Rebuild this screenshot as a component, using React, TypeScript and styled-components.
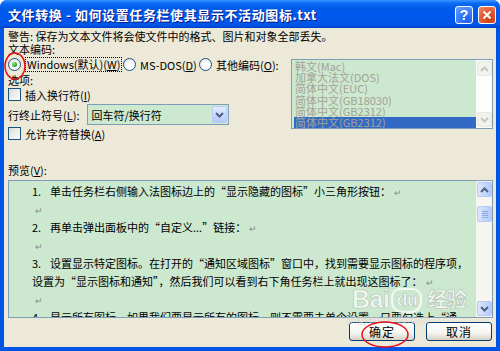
import React from "react";
import styled, { createGlobalStyle } from "styled-components";

const Global = createGlobalStyle`
  html, body { margin: 0; padding: 0; background: #ffffff; }
  body { font-family: "SimSun", "Noto Sans CJK SC", "Liberation Sans", sans-serif; }
  * { box-sizing: border-box; }
`;

const CJK = `"SimSun", "Noto Sans CJK SC", "Liberation Sans", sans-serif`;

const Window = styled.div`
  position: relative;
  width: 500px;
  height: 351px;
  display: flex;
  flex-direction: column;
  background: #0055e5;
  border-radius: 7px 7px 0 0;
  overflow: hidden;
  font-family: ${CJK};
  font-size: 11px;
  color: #000;
`;

const TitleBar = styled.div`
  height: 28px;
  flex: none;
  display: flex;
  align-items: center;
  justify-content: space-between;
  padding: 0 4px 0 8px;
  background: linear-gradient(
    to bottom,
    #3d95ff 0%,
    #0a6af5 12%,
    #005be9 30%,
    #0058ee 60%,
    #0055e8 90%,
    #0040c8 100%
  );
`;

const TitleText = styled.div`
  color: #fff;
  font-weight: bold;
  font-size: 13px;
  letter-spacing: 0.6px;
  text-shadow: 1px 1px 0 #0a1883;
  white-space: nowrap;
`;

const TitleButtons = styled.div`
  display: flex;
  gap: 5px;
  align-items: center;
  margin-top: 1px;
`;

const CapButton = styled.div<{ $kind: "help" | "close" }>`
  width: 18px;
  height: 18px;
  border: 1px solid #fff;
  border-radius: 3px;
  display: flex;
  align-items: center;
  justify-content: center;
  color: #fff;
  font-family: "Liberation Sans", sans-serif;
  font-weight: bold;
  font-size: 14px;
  background: ${(p) =>
    p.$kind === "help"
      ? "radial-gradient(circle at 70% 80%, #1f5ff0 0%, #3b7dff 50%, #6fa2ff 100%)"
      : "radial-gradient(circle at 70% 80%, #c8400f 0%, #e0582f 50%, #f08c6a 100%)"};
`;

const Body = styled.div`
  flex: 1;
  margin: 0 4px 4px 4px;
  background: #ece9d8;
  padding: 2px 3px 0 4px;
  display: flex;
  flex-direction: column;
`;

const Line = styled.div<{ $h?: number }>`
  height: ${(p) => p.$h ?? 13}px;
  line-height: ${(p) => p.$h ?? 13}px;
  white-space: nowrap;
`;

const EncodingArea = styled.div`
  display: flex;
  justify-content: space-between;
  align-items: flex-start;
`;

const LeftCol = styled.div`
  display: flex;
  flex-direction: column;
`;

const RadioRow = styled.div`
  display: flex;
  align-items: center;
  height: 17px;
  margin-top: 1px;
`;

const RadioItem = styled.label<{ $w: number }>`
  display: flex;
  align-items: center;
  gap: 4px;
  width: ${(p) => p.$w}px;
  white-space: nowrap;
`;

const Radio = styled.span<{ $on?: boolean }>`
  width: 13px;
  height: 13px;
  border-radius: 50%;
  border: 1px solid #1c5180;
  background: radial-gradient(circle at 60% 65%, #ffffff 30%, #dcdcd6 100%);
  display: flex;
  align-items: center;
  justify-content: center;
  flex: none;
  &::after {
    content: "";
    display: ${(p) => (p.$on ? "block" : "none")};
    width: 5px;
    height: 5px;
    border-radius: 50%;
    background: radial-gradient(circle at 35% 35%, #8ee08a 0%, #21a121 70%);
  }
`;

const Focus = styled.span`
  border: 1px dotted #000;
  padding: 0 1px;
  line-height: 13px;
`;

const Check = styled.span`
  width: 13px;
  height: 13px;
  border: 1px solid #1c5180;
  background: linear-gradient(135deg, #dcdcd6 0%, #ffffff 100%);
  flex: none;
`;

const CheckRow = styled.div`
  display: flex;
  align-items: center;
  gap: 4px;
  height: 15px;
`;

const ComboRow = styled.div`
  display: flex;
  align-items: center;
  height: 21px;
  margin: 2px 0 1px;
`;

const Combo = styled.div`
  margin-left: 8px;
  width: 142px;
  height: 21px;
  border: 1px solid #7f9db9;
  background: #cce8cf;
  display: flex;
  align-items: center;
  justify-content: space-between;
  padding: 1px 1px 1px 3px;
`;

const DropBtn = styled.div`
  width: 15px;
  height: 17px;
  border: 1px solid #b9cdf4;
  border-radius: 2px;
  background: linear-gradient(to bottom, #e4ecfd 0%, #c6d6fb 60%, #b3c8f7 100%);
  display: flex;
  align-items: center;
  justify-content: center;
`;

const ListBox = styled.div`
  margin-top: 4px;
  width: 202px;
  height: 70px;
  border: 1px solid #7f9db9;
  background: #cce8cf;
  display: flex;
`;

const ListItems = styled.div`
  flex: 1;
  display: flex;
  flex-direction: column;
  padding: 1px 0 0 2px;
`;

const ListItem = styled.div<{ $sel?: boolean }>`
  height: 11.2px;
  line-height: 11px;
  font-size: 11px;
  color: #a5a295;
  padding-left: 1px;
  white-space: nowrap;
  background: ${(p) => (p.$sel ? "#316ac5" : "transparent")};
`;

const ScrollBar = styled.div<{ $disabled?: boolean }>`
  width: 16px;
  flex: none;
  display: flex;
  flex-direction: column;
  justify-content: space-between;
  background: ${(p) => (p.$disabled ? "#fdfdfb" : "#f6f5f0")};
  padding: 1px 0;
`;

const ScrollBtn = styled.div<{ $disabled?: boolean }>`
  width: 15px;
  height: 15px;
  margin-left: 1px;
  border-radius: 2px;
  display: flex;
  align-items: center;
  justify-content: center;
  border: 1px solid ${(p) => (p.$disabled ? "#e8e8e0" : "#b5c9f6")};
  background: ${(p) =>
    p.$disabled
      ? "#f3f3ee"
      : "linear-gradient(to right, #dce6fd 0%, #c3d4fb 60%, #b6cbf8 100%)"};
`;

const Thumb = styled.div`
  width: 15px;
  height: 16px;
  margin: 9px 0 0 1px;
  border-radius: 2px;
  border: 1px solid #b5c9f6;
  background: linear-gradient(to right, #dce6fd 0%, #c3d4fb 60%, #b6cbf8 100%);
  display: flex;
  flex-direction: column;
  align-items: center;
  justify-content: center;
  gap: 1px;
  & > span {
    width: 6px;
    height: 1px;
    background: #8aa8e8;
  }
`;

const ScrollTop = styled.div`
  display: flex;
  flex-direction: column;
`;

const PreviewLabel = styled(Line)`
  margin-top: 23px;
`;

const Preview = styled.div`
  margin-top: 3px;
  height: 138px;
  border: 1px solid #7f9db9;
  background: #cce8cf;
  display: flex;
  overflow: hidden;
`;

const PreviewText = styled.div`
  flex: 1;
  padding: 1px 0 0 23px;
  overflow: hidden;
`;

const PLine = styled.div`
  height: 18px;
  line-height: 18px;
  white-space: nowrap;
  font-size: 11px;
`;

const Num = styled.span`
  display: inline-block;
  width: 18px;
`;

const Ret = styled.span`
  color: #8a8a8a;
  font-size: 9px;
  margin-left: 3px;
`;

const ButtonRow = styled.div`
  display: flex;
  justify-content: flex-end;
  gap: 11px;
  margin-top: 4px;
  padding-right: 1px;
`;

const Button = styled.div`
  width: 66px;
  height: 19px;
  border: 1px solid #003c74;
  border-radius: 3px;
  background: linear-gradient(to bottom, #ffffff 0%, #f4f4f0 60%, #d6d0c5 100%);
  display: flex;
  align-items: center;
  justify-content: center;
  font-size: 12px;
  letter-spacing: 1px;
`;

const Ellipse = styled.svg<{ $x: number; $y: number }>`
  position: absolute;
  left: ${(p) => p.$x}px;
  top: ${(p) => p.$y}px;
  pointer-events: none;
`;

const Watermark = styled.div`
  position: absolute;
  left: 352px;
  top: 284px;
  display: flex;
  flex-direction: column;
  align-items: flex-start;
  pointer-events: none;
  color: rgba(255, 255, 255, 0.72);
  font-family: "Liberation Sans", sans-serif;
  font-weight: bold;
`;

const WmLogo = styled.div`
  font-size: 25px;
  line-height: 26px;
  letter-spacing: -0.5px;
  -webkit-text-stroke: 0.6px rgba(120, 120, 120, 0.45);
  display: flex;
  align-items: center;
  gap: 2px;
`;

const WmPaw = styled.span`
  font-size: 18px;
  line-height: 18px;
  padding: 1px 3px 2px;
  border: 2px solid rgba(255, 255, 255, 0.75);
  border-radius: 9px 9px 11px 11px;
  margin-top: 4px;
`;

const WmCn = styled.span`
  font-family: "Noto Sans CJK SC", sans-serif;
  font-size: 20px;
  margin-left: 3px;
`;

const WmUrl = styled.div`
  font-size: 10px;
  line-height: 11px;
  margin-top: 1px;
  margin-left: -4px;
  font-weight: normal;
  color: rgba(255, 255, 255, 0.6);
  -webkit-text-stroke: 0.3px rgba(120, 120, 120, 0.4);
`;

const Chevron = ({ dir, color }: { dir: "up" | "down"; color: string }) => (
  <svg width="9" height="6" viewBox="0 0 9 6">
    <path
      d={dir === "up" ? "M1 5 L4.5 1.5 L8 5" : "M1 1 L4.5 4.5 L8 1"}
      fill="none"
      stroke={color}
      strokeWidth="2"
    />
  </svg>
);

const listItems = [
  "韩文(Mac)",
  "加拿大法文(DOS)",
  "简体中文(EUC)",
  "简体中文(GB18030)",
  "简体中文(GB2312)",
  "简体中文(GB2312)",
];

export default function App() {
  return (
    <>
      <Global />
      <Window>
        <TitleBar>
          <TitleText>文件转换 - 如何设置任务栏使其显示不活动图标.txt</TitleText>
          <TitleButtons>
            <CapButton $kind="help">?</CapButton>
            <CapButton $kind="close">
              <svg width="10" height="10" viewBox="0 0 10 10">
                <path d="M1.5 1.5 L8.5 8.5 M8.5 1.5 L1.5 8.5" stroke="#fff" strokeWidth="2" />
              </svg>
            </CapButton>
          </TitleButtons>
        </TitleBar>
        <Body>
          <Line>警告: 保存为文本文件将会使文件中的格式、图片和对象全部丢失。</Line>
          <Line $h={12}>文本编码:</Line>
          <EncodingArea>
            <LeftCol>
              <RadioRow>
                <RadioItem $w={115}>
                  <Radio $on />
                  <Focus>Windows(默认)(<u>W</u>)</Focus>
                </RadioItem>
                <RadioItem $w={76}>
                  <Radio />
                  <span>MS-DOS(<u>D</u>)</span>
                </RadioItem>
                <RadioItem $w={90}>
                  <Radio />
                  <span>其他编码(<u>O</u>):</span>
                </RadioItem>
              </RadioRow>
              <Line $h={14}>选项:</Line>
              <CheckRow>
                <Check />
                <span>插入换行符(<u>I</u>)</span>
              </CheckRow>
              <ComboRow>
                <span>行终止符号(<u>L</u>):</span>
                <Combo>
                  <span>回车符/换行符</span>
                  <DropBtn>
                    <Chevron dir="down" color="#4d6185" />
                  </DropBtn>
                </Combo>
              </ComboRow>
              <CheckRow>
                <Check />
                <span>允许字符替换(<u>A</u>)</span>
              </CheckRow>
            </LeftCol>
            <ListBox>
              <ListItems>
                {listItems.map((t, i) => (
                  <ListItem key={i} $sel={i === 5}>
                    {t}
                  </ListItem>
                ))}
              </ListItems>
              <ScrollBar $disabled>
                <ScrollBtn $disabled>
                  <Chevron dir="up" color="#c9c7ba" />
                </ScrollBtn>
                <ScrollBtn $disabled>
                  <Chevron dir="down" color="#c9c7ba" />
                </ScrollBtn>
              </ScrollBar>
            </ListBox>
          </EncodingArea>
          <PreviewLabel>预览(<u>V</u>):</PreviewLabel>
          <Preview>
            <PreviewText>
              <PLine>
                <Num>1.</Num>单击任务栏右侧输入法图标边上的“显示隐藏的图标”小三角形按钮：<Ret>↵</Ret>
              </PLine>
              <PLine>
                <Ret>↵</Ret>
              </PLine>
              <PLine>
                <Num>2.</Num>再单击弹出面板中的“自定义...”链接：<Ret>↵</Ret>
              </PLine>
              <PLine>
                <Ret>↵</Ret>
              </PLine>
              <PLine>
                <Num>3.</Num>设置显示特定图标。在打开的“通知区域图标”窗口中，找到需要显示图标的程序项，
              </PLine>
              <PLine>
                设置为“显示图标和通知”，然后我们可以看到右下角任务栏上就出现这图标了：<Ret>↵</Ret>
              </PLine>
              <PLine>
                <Ret>↵</Ret>
              </PLine>
              <PLine>
                <Num>4.</Num>显示所有图标。如果我们要显示所有的图标，则不需要去单个设置，只要勾选上“通
              </PLine>
            </PreviewText>
            <ScrollBar>
              <ScrollTop>
                <ScrollBtn>
                  <Chevron dir="up" color="#4d6185" />
                </ScrollBtn>
                <Thumb>
                  <span />
                  <span />
                  <span />
                  <span />
                </Thumb>
              </ScrollTop>
              <ScrollBtn>
                <Chevron dir="down" color="#4d6185" />
              </ScrollBtn>
            </ScrollBar>
          </Preview>
          <ButtonRow>
            <Button>确定</Button>
            <Button>取消</Button>
          </ButtonRow>
        </Body>
        <Watermark>
          <WmLogo>
            <span>Bai</span>
            <WmPaw>du</WmPaw>
            <WmCn>经验</WmCn>
          </WmLogo>
          <WmUrl>jingyan.baidu.com</WmUrl>
        </Watermark>
        <Ellipse $x={3} $y={51} width="24" height="30" viewBox="0 0 24 30">
          <ellipse cx="12" cy="15" rx="10" ry="13" fill="none" stroke="#e8141c" strokeWidth="1.5" />
        </Ellipse>
        <Ellipse $x={360} $y={320} width="50" height="29" viewBox="0 0 50 29">
          <ellipse cx="25" cy="14.5" rx="23" ry="12.5" fill="none" stroke="#e8141c" strokeWidth="1.5" />
        </Ellipse>
      </Window>
    </>
  );
}
